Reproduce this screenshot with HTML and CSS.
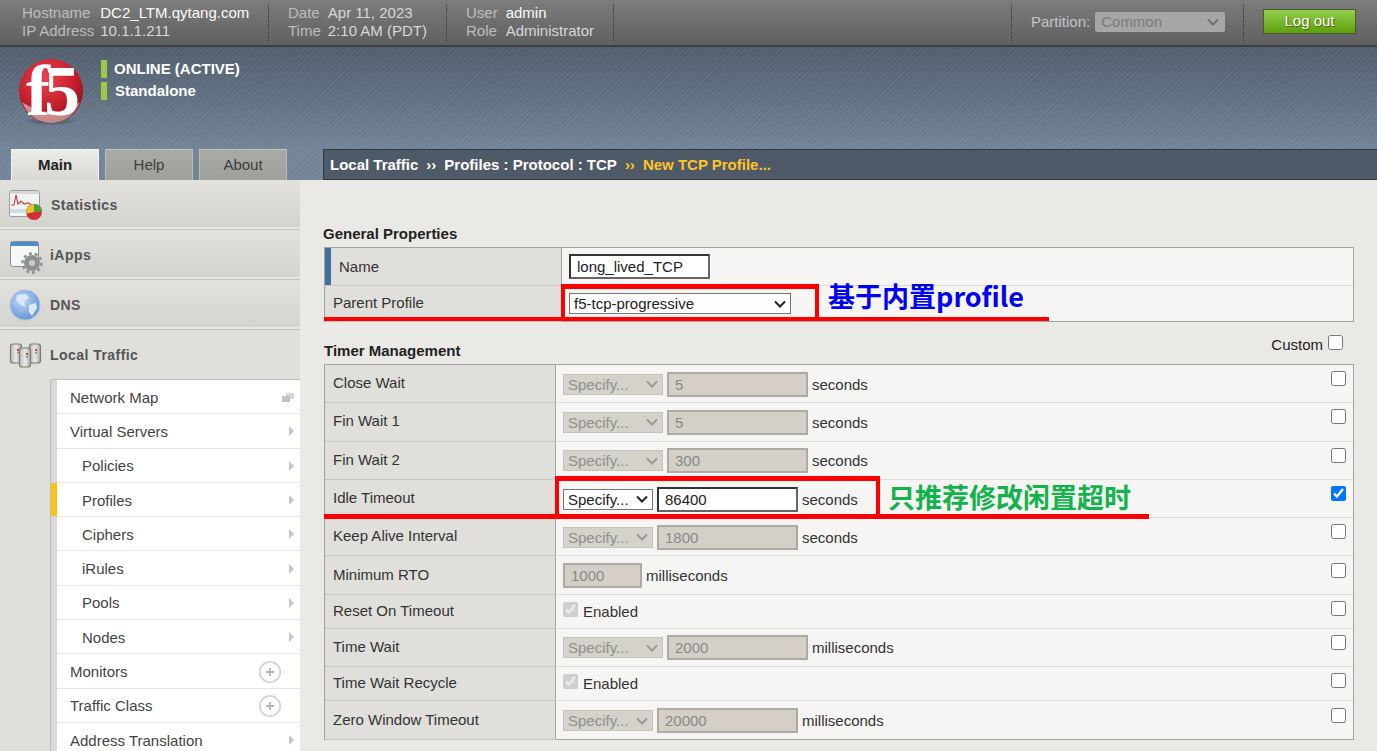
FILE: index.html
```html
<!DOCTYPE html>
<html lang="en">
<head>
<meta charset="utf-8">
<title>New TCP Profile</title>
<link rel="stylesheet" href="styles.css">
</head>
<body>
<div class="page">
  <header class="topbar">
    <div class="info info-host"><span class="k">Hostname</span><span class="v">DC2_LTM.qytang.com</span><span class="k">IP Address</span><span class="m">10.1.1.211</span></div>
    <div class="info info-date"><span class="k">Date</span><span class="m">Apr 11, 2023</span><span class="k">Time</span><span class="m">2:10 AM (PDT)</span></div>
    <div class="info info-user"><span class="k">User</span><span class="v">admin</span><span class="k">Role</span><span class="m">Administrator</span></div>
    <div class="partition">
      <span class="k">Partition:</span>
      <select class="part-select" disabled><option>Common</option></select>
    </div>
    <div class="logout-wrap"><button class="logout">Log out</button></div>
  </header>

  <section class="banner">
    <div class="brand">
      <svg class="logo" viewBox="0 -12 70 82" width="70" height="82">
        <defs>
          <radialGradient id="ball" cx="0.42" cy="0.3" r="0.75">
            <stop offset="0" stop-color="#e8434f"/><stop offset="0.6" stop-color="#c61f2d"/><stop offset="1" stop-color="#7d0f18"/>
          </radialGradient>
          <radialGradient id="shade" cx="0.5" cy="0.5" r="0.5">
            <stop offset="0" stop-color="#20262c" stop-opacity=".6"/><stop offset="1" stop-color="#20262c" stop-opacity="0"/>
          </radialGradient>
        </defs>
        <ellipse cx="33" cy="61" rx="26" ry="4.5" fill="url(#shade)"/>
        <circle cx="33" cy="31" r="32" fill="url(#ball)"/>
        <path d="M4 42 Q33 62 62 42 Q54 62 33 63 Q12 62 4 42Z" fill="#efe9e6" opacity=".55"/>
        <text x="8" y="55" class="logo-text">f5</text>
      </svg>
      <div class="status">
        <div class="status-row"><span class="bar"></span><span class="st-a">ONLINE (ACTIVE)</span></div>
        <div class="status-row"><span class="bar"></span><span class="st-b">Standalone</span></div>
      </div>
    </div>
    <nav class="tabrow">
      <div class="tabs">
        <span class="tab tab-on">Main</span>
        <span class="tab">Help</span>
        <span class="tab">About</span>
      </div>
      <div class="crumb">Local Traffic<span class="sep">››</span>Profiles : Protocol : TCP<span class="sep sep-y">››</span><span class="cur">New TCP Profile...</span></div>
    </nav>
  </section>

  <div class="body">
    <aside class="side">
      <div class="sec sec-first">
        <svg class="ico" width="46" height="40" viewBox="0 0 46 40">
          <rect x="9.5" y="5.5" width="30" height="26" rx="2" fill="#f2f3f3" stroke="#9b9b9b"/>
          <rect x="10" y="6" width="29" height="3" fill="#d5d6d6"/>
          <rect x="10" y="24" width="20" height="4" fill="#cfdcea"/>
          <path d="M11 20 L14 20 L16 10 L18 19 L21 16 L24 19 L28 18 L32 20" fill="none" stroke="#c8474a" stroke-width="1.2"/>
          <circle cx="34" cy="27" r="8" fill="#cf2f35"/>
          <path d="M34 27 L34 19 A8 8 0 0 1 42 27Z" fill="#4f9c3a"/>
          <path d="M34 27 L34 19 A8 8 0 0 0 26.2 28.7Z" fill="#e8c32c"/>
        </svg>
        <span>Statistics</span>
      </div>
      <div class="sec">
        <svg class="ico" width="46" height="40" viewBox="0 0 46 40">
          <rect x="10.5" y="6.5" width="28" height="25" rx="2" fill="#f7f8f9" stroke="#8f8f8f"/>
          <rect x="11" y="7" width="27" height="4" fill="#4e8ccb"/>
          <circle cx="32" cy="28" r="8" fill="#8d9192"/>
          <circle cx="32" cy="28" r="9.5" fill="none" stroke="#8d9192" stroke-width="2.4" stroke-dasharray="3 2.9"/>
          <circle cx="32" cy="28" r="3" fill="#c9cbcb"/>
        </svg>
        <span>iApps</span>
      </div>
      <div class="sec">
        <svg class="ico" width="46" height="40" viewBox="0 0 46 40">
          <defs><radialGradient id="globe" cx="0.4" cy="0.35" r="0.7"><stop offset="0" stop-color="#c4dbf6"/><stop offset="1" stop-color="#5e8fd6"/></radialGradient></defs>
          <circle cx="25" cy="20" r="15" fill="url(#globe)" stroke="#a9c0df"/>
          <path d="M17 10 L26 9 L29 13 L24 17 L25 22 L21 20 L16 15Z M29 20 L36 18 L37 23 L32 31 L29 27Z" fill="#dbe8f8"/>
        </svg>
        <span>DNS</span>
      </div>
      <div class="sec sec-open">
        <svg class="ico" width="46" height="40" viewBox="0 0 46 40">
          <defs><linearGradient id="srv" x1="0" x2="1" y1="0" y2="0"><stop offset="0" stop-color="#b9b9b7"/><stop offset=".5" stop-color="#e9e9e7"/><stop offset="1" stop-color="#a9a9a7"/></linearGradient></defs>
          <g fill="url(#srv)" stroke="#7a7a78" stroke-width="1.2">
            <rect x="10.5" y="9" width="11" height="19" rx="2.5"/>
            <rect x="29.5" y="9" width="11" height="19" rx="2.5"/>
            <rect x="19.5" y="13" width="11" height="19" rx="2.5"/>
          </g>
          <g fill="#d2453f"><rect x="17" y="14" width="2" height="2"/><rect x="35" y="14" width="2" height="2"/><rect x="26" y="18" width="2" height="2"/></g>
          <g fill="#6dab4f"><rect x="17" y="17" width="2" height="1.5"/><rect x="35" y="17" width="2" height="1.5"/><rect x="26" y="21" width="2" height="1.5"/></g>
        </svg>
        <span>Local Traffic</span>
      </div>
      <ul class="sub">
        <li><a>Network Map</a><svg class="mapi" width="12" height="9" viewBox="0 0 12 9"><rect x="4" y="0" width="8" height="6" fill="#d6d6d6"/><rect x="0" y="3" width="8" height="6" fill="#c4c4c4"/></svg></li>
        <li><a>Virtual Servers</a><i class="arr"></i></li>
        <li class="in"><a>Policies</a><i class="arr"></i></li>
        <li class="in on"><a>Profiles</a><i class="arr"></i></li>
        <li class="in"><a>Ciphers</a><i class="arr"></i></li>
        <li class="in"><a>iRules</a><i class="arr"></i></li>
        <li class="in"><a>Pools</a><i class="arr"></i></li>
        <li class="in"><a>Nodes</a><i class="arr"></i></li>
        <li><a>Monitors</a><svg class="plus" width="24" height="24" viewBox="0 0 24 24"><circle cx="12" cy="12" r="10.2" fill="#fff" stroke="#d4d4d2" stroke-width="1.8"/><path d="M12 8v8M8 12h8" stroke="#b5b5b3" stroke-width="1.8"/></svg></li>
        <li><a>Traffic Class</a><svg class="plus" width="24" height="24" viewBox="0 0 24 24"><circle cx="12" cy="12" r="10.2" fill="#fff" stroke="#d4d4d2" stroke-width="1.8"/><path d="M12 8v8M8 12h8" stroke="#b5b5b3" stroke-width="1.8"/></svg></li>
        <li><a>Address Translation</a><i class="arr"></i></li>
      </ul>
    </aside>

    <main class="content">
      <h2 class="h-general">General Properties</h2>
      <div class="panel">
        <div class="row row-name">
          <div class="lab lab-req">Name</div>
          <div class="val val-g"><input class="txt txt-name" type="text" value="long_lived_TCP"></div>
        </div>
        <div class="row row-parent">
          <div class="lab lab-g">Parent Profile</div>
          <div class="val val-g"><select class="sel sel-parent"><option>f5-tcp-progressive</option></select></div>
        </div>
      </div>

      <div class="head-timer">
        <h2>Timer Management</h2>
        <label class="custom">Custom <input type="checkbox"></label>
      </div>
      <div class="panel timers">
        <div class="row"><div class="lab">Close Wait</div><div class="val"><select class="sel sel-w" disabled><option>Specify...</option></select><input class="txt dis" disabled value="5"><span>seconds</span></div><input class="cb" type="checkbox"></div>
        <div class="row"><div class="lab">Fin Wait 1</div><div class="val"><select class="sel sel-w" disabled><option>Specify...</option></select><input class="txt dis" disabled value="5"><span>seconds</span></div><input class="cb" type="checkbox"></div>
        <div class="row"><div class="lab">Fin Wait 2</div><div class="val"><select class="sel sel-w" disabled><option>Specify...</option></select><input class="txt dis" disabled value="300"><span>seconds</span></div><input class="cb" type="checkbox"></div>
        <div class="row"><div class="lab">Idle Timeout</div><div class="val"><select class="sel"><option>Specify...</option></select><input class="txt txt-on" value="86400"><span>seconds</span></div><input class="cb" type="checkbox" checked></div>
        <div class="row"><div class="lab">Keep Alive Interval</div><div class="val"><select class="sel" disabled><option>Specify...</option></select><input class="txt dis" disabled value="1800"><span>seconds</span></div><input class="cb" type="checkbox"></div>
        <div class="row"><div class="lab">Minimum RTO</div><div class="val"><input class="txt dis txt-s" disabled value="1000"><span>milliseconds</span></div><input class="cb" type="checkbox"></div>
        <div class="row row-s"><div class="lab">Reset On Timeout</div><div class="val val-c"><input class="en" type="checkbox" checked disabled><span>Enabled</span></div><input class="cb" type="checkbox"></div>
        <div class="row"><div class="lab">Time Wait</div><div class="val"><select class="sel sel-w" disabled><option>Specify...</option></select><input class="txt dis" disabled value="2000"><span>milliseconds</span></div><input class="cb" type="checkbox"></div>
        <div class="row row-s"><div class="lab">Time Wait Recycle</div><div class="val val-c"><input class="en" type="checkbox" checked disabled><span>Enabled</span></div><input class="cb" type="checkbox"></div>
        <div class="row"><div class="lab">Zero Window Timeout</div><div class="val"><select class="sel" disabled><option>Specify...</option></select><input class="txt dis" disabled value="20000"><span>milliseconds</span></div><input class="cb" type="checkbox"></div>
      </div>
    </main>
  </div>

  <div class="mark mark-a1"></div>
  <div class="mark mark-a2"></div>
  <div class="note note-a">基于内置profile</div>
  <div class="mark mark-b1"></div>
  <div class="mark mark-b2"></div>
  <div class="note note-b">只推荐修改闲置超时</div>
</div>
</body>
</html>
```
FILE: styles.css
```css
* { box-sizing: border-box; }
html, body { margin: 0; height: 100%; overflow: hidden; }
body { font-family: "Liberation Sans", Arial, sans-serif; font-size: 15px; color: #222; background: #ebe9e5; }
.page { position: relative; width: 1377px; height: 751px; overflow: hidden; }

/* top bar */
.topbar { height: 47px; display: flex; background: linear-gradient(#7d7d7d, #5f5f5f); border-bottom: 2px solid #3c3e41; padding-top: 4px; }
.info { display: grid; grid-template-columns: auto auto; grid-auto-rows: 18px; justify-content: start; align-content: start; height: 37px; border-right: 1px dotted #333; line-height: 18px; }
.info .k { color: #bdbdbd; }
.info .v { color: #fbfbfb; }
.info .m { color: #d8d8d8; }
.info-host { width: 269px; padding-left: 22px; column-gap: 6px; }
.info-date { width: 178px; padding-left: 19px; column-gap: 7px; }
.info-user { width: 167px; padding-left: 19px; column-gap: 8px; }
.partition { margin-left: 397px; width: 233px; height: 37px; border-left: 1px dotted #333; border-right: 1px dotted #333; display: flex; align-items: center; padding: 0 0 2px 19px; gap: 5px; }
.partition .k { color: #c4c4c4; }
.part-select { appearance: none; width: 130px; height: 20px; border: 0; border-radius: 2px; color: #7a7a7a; font: 15px "Liberation Sans", Arial, sans-serif; opacity: 1; padding: 0 0 0 6px;
  background: #a6a6a6 url("data:image/svg+xml,%3Csvg xmlns='http://www.w3.org/2000/svg' width='12' height='8'%3E%3Cpath d='M1 1.5l5 5 5-5' fill='none' stroke='%23707070' stroke-width='2'/%3E%3C/svg%3E") no-repeat right 6px center; }
.logout-wrap { padding: 5px 0 0 19px; }
.logout { width: 93px; height: 25px; padding: 0 0 2px; border: 1px solid #4a5a2a; background: linear-gradient(#93cf4d, #5d9f0c); color: #fff; font: 15px "Liberation Sans", Arial, sans-serif; text-shadow: 1px 1px 1px #44620e; }

/* banner */
.banner { height: 133px; display: flex; flex-direction: column; justify-content: space-between;
  background: repeating-linear-gradient(135deg, rgba(255,255,255,.018) 0 2px, rgba(0,0,0,.018) 2px 4px), linear-gradient(#525f6e, #74869a 103px, #74869a); }
.brand { display: flex; padding: 1px 0 0 18px; height: 100px; }
.logo { flex: none; }
.logo-text { font-family: "Liberation Serif", serif; font-weight: 700; font-size: 72px; fill: #fff; letter-spacing: -6px; }
.status { margin: 12px 0 0 13px; color: #fff; font-weight: 700; }
.status-row { display: flex; align-items: center; height: 18px; margin-bottom: 4px; }
.status-row span + span { margin-top: -2px; }
.bar { width: 6px; height: 18px; background: #9bcb45; margin-right: 7px; }
.st-b { margin-left: 1px; }
.tabrow { display: flex; height: 31px; padding-left: 11px; align-items: flex-end; }
.tabs { display: flex; gap: 6px; width: 312px; }
.tab { width: 88px; height: 31px; border-top: 1px solid #c2c2be; border-left: 1px solid #bcbcb8; border-right: 1px solid #bcbcb8; background: linear-gradient(#a9a9a5, #9f9f9b); color: #3d3d3d; text-align: center; line-height: 30px; }
.tab-on { background: linear-gradient(#ecebe8, #d8d7d2); color: #222; font-weight: 700; border-color: #f4f4f2; }
.crumb { flex: 1; height: 31px; background: #4f5a68; border: 1px solid #30363e; border-right: 0; color: #fff; font-weight: 700; line-height: 30px; padding-left: 6px; }
.sep { margin: 0 8px; }
.sep-y, .cur { color: #ffc425; }

/* sidebar */
.body { display: flex; height: 571px; }
.side { width: 300px; flex: none; background: #e0dfdb; }
.sec { height: 50px; padding-top: 3px; display: flex; align-items: center; font-size: 14px; font-weight: 700; color: #555; letter-spacing: .45px; background: linear-gradient(#e2e1dd, #d4d3ce); border-top: 1px solid #c4c3bf; border-bottom: 2px solid #e6e5e1; }
.sec-first { height: 49px; border-top: 0; }
.sec-first span { margin-left: 1px; }
.sec .ico { margin: 0 4px 0 0; flex: none; }
.sec-open { background: #e0dfdb; border-bottom: 0; height: 51px; padding-top: 0; }
.sub { list-style: none; margin: 0 0 0 51px; padding: 0; border-left: 6px solid #dad9d6; box-shadow: -1px 0 0 #bdbcb8, 0 -1px 0 #bdbcb8; }
.sub li { position: relative; height: 34.3px; background: #fff; border-bottom: 1px solid #e6e6e4; padding: 1px 6px 0 13px; line-height: 33px; color: #444; display: flex; align-items: center; justify-content: space-between; }
.sub li.in { padding-left: 25px; }
.sub li.on::before { content: ""; position: absolute; left: -6px; top: 0; bottom: 0; width: 6px; background: #f5c518; }
.arr { border-left: 5px solid #c6c6c6; border-top: 5px solid transparent; border-bottom: 5px solid transparent; }
.plus { margin-right: 12px; }

/* content */
.content { flex: 1; padding: 46px 23px 0 24px; background: #ebe9e5; }
h2 { font-size: 15px; margin: 0; font-weight: 700; color: #222; line-height: 16px; }
.h-general { margin-left: -1px; height: 21px; }
.panel { border: 1px solid #a2a2a0; background: #f6f5f3; }
.row { display: flex; height: 38.3px; border-bottom: 1px solid #dcdbd8; align-items: stretch; }
.row:last-child { border-bottom: 0; }
.row-s { height: 33.9px; }
.row-s .cb { margin-bottom: 6px; }
.row-name { height: 38px; }
.row-parent { height: 35px; }
.lab { width: 231px; flex: none; background: #e0dfdb; border-right: 1px solid #a2a2a0; padding: 0 0 2px 8px; display: flex; align-items: center; box-shadow: 0 1px 0 #c8c7c3; color: #333; }
.lab-req { width: 237px; border-left: 6px solid #3e6f9f; padding-left: 8px; padding-bottom: 0; }
.lab-g { width: 237px; padding-bottom: 2px; }
.val { flex: 1; display: flex; align-items: center; padding: 1px 0 0 7px; gap: 4px; color: #333; }
.val-g { padding: 0 0 0 7px; }
.val-c { gap: 5px; padding-left: 7px; }
.sel { appearance: none; width: 90px; height: 21px; font: 15px "Liberation Sans", Arial, sans-serif; border: 1px solid #767676; color: #222; padding: 0 0 0 4px;
  background: #fff url("data:image/svg+xml,%3Csvg xmlns='http://www.w3.org/2000/svg' width='12' height='8'%3E%3Cpath d='M1 1.5l5 5 5-5' fill='none' stroke='%23222' stroke-width='2'/%3E%3C/svg%3E") no-repeat right 4px center; }
.sel-w { width: 100px; }
.sel:disabled { color: #8f8f8f; border-color: #c5c3bc; opacity: 1;
  background: #d5d2ca url("data:image/svg+xml,%3Csvg xmlns='http://www.w3.org/2000/svg' width='12' height='8'%3E%3Cpath d='M1 1.5l5 5 5-5' fill='none' stroke='%23999' stroke-width='2'/%3E%3C/svg%3E") no-repeat right 4px center; }
.sel-parent { width: 222px; }
.txt { width: 141px; height: 25px; font: 15px "Liberation Sans", Arial, sans-serif; padding: 0 6px; color: #222; background: #fff; border: 2px solid; border-color: #333 #666 #666 #333; }
.dis { background: #d4d0c8; color: #888; border-color: #acaaa2; }
.txt-s { width: 79px; }
.cb { align-self: center; margin: 0 7px 10px 0; width: 15px; height: 15px; flex: none; }
.en { margin: 0 0 4px; width: 15px; height: 15px; }
.head-timer { display: flex; justify-content: space-between; height: 42px; padding-top: 21px; }
.custom { color: #222; display: flex; gap: 5px; margin: -9px 11px 0 0; height: 20px; align-items: center; }
.custom input { margin: 0 0 4px; width: 15px; height: 15px; }

/* annotations */
.mark { position: absolute; }
.mark-a1 { left: 561px; top: 284px; width: 258px; height: 37px; border: 4px solid #fe0000; border-top-width: 5px; }
.mark-a2 { left: 324px; top: 317px; width: 725px; height: 4px; background: #fe0000; }
.mark-b1 { left: 555px; top: 476px; width: 325px; height: 43px; border: 4px solid #fe0000; border-top-width: 5px; }
.mark-b2 { left: 324px; top: 514px; width: 825px; height: 5px; background: #fe0000; }
.note { position: absolute; font-family: "Noto Sans CJK SC", "Liberation Sans", sans-serif; font-weight: 700; font-size: 27px; line-height: 32px; white-space: nowrap; }
.note-a { left: 828px; top: 280px; color: #0000f5; }
.note-b { left: 888px; top: 481px; color: #12b34c; }
```
